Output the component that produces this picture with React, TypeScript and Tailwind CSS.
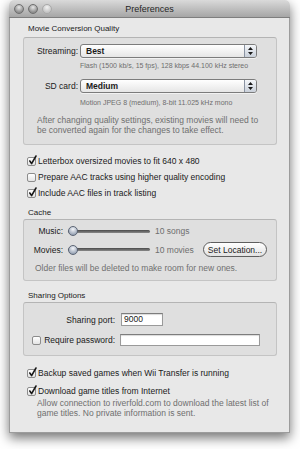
function Light({ dim }: { dim?: boolean }) {
  return (
    <span
      className={
        dim
          ? "block w-[10px] h-[10px] rounded-full border border-[#a9a9a9] bg-[radial-gradient(circle_at_50%_30%,#f2f2f2,#c4c4c4_70%)]"
          : "block w-[10px] h-[10px] rounded-full border border-[#6f6f6f] bg-[radial-gradient(circle_at_50%_30%,#e6e6e6,#8e8e8e_70%)]"
      }
    />
  );
}

function Check({ on }: { on?: boolean }) {
  return (
    <span className="relative block w-[9px] h-[9px] shrink-0 rounded-[2px] border border-[#8c8c8c] bg-gradient-to-b from-white to-[#e4e4e4]">
      {on && (
        <svg width="9" height="10" viewBox="0 0 9 10" className="absolute left-[0px] top-[-3px] overflow-visible">
          <path d="M1.8 6 L3.6 8.6 L8 1" fill="none" stroke="#1a1a1a" strokeWidth="1.6" strokeLinecap="round" strokeLinejoin="round" />
        </svg>
      )}
    </span>
  );
}

function Popup({ value }: { value: string }) {
  return (
    <div className="flex h-[14px] w-[177px] items-stretch rounded-[3px] border border-[#7c7c7c] bg-gradient-to-b from-white to-[#e6e6e6] shadow-[0_1px_0_rgba(255,255,255,0.6)]">
      <span className="flex-1 pl-[5px] text-[8.5px] leading-[12px] font-bold text-[#1a1a1a]">{value}</span>
      <span className="flex w-[12px] items-center justify-center rounded-r-[2px] border-l border-[#8a93a2] bg-gradient-to-b from-[#f4f6f9] to-[#c9d0da]">
        <svg width="5" height="8" viewBox="0 0 5 8">
          <path d="M2.5 0 L5 3 L0 3 Z M0 5 L5 5 L2.5 8 Z" fill="#1a1a1a" />
        </svg>
      </span>
    </div>
  );
}

function Slider() {
  return (
    <div className="relative flex h-[12px] w-[82px] items-center">
      <div className="h-[3px] w-full rounded-full bg-gradient-to-b from-[#4a4a4a] to-[#8a8a8a]" />
      <span className="absolute left-0 top-[1px] block w-[10px] h-[10px] rounded-full border border-[#5c6575] bg-[radial-gradient(circle_at_50%_30%,#f4f6fa,#9aa5b6_75%)]" />
    </div>
  );
}

function CheckRow({ on, label, className }: { on?: boolean; label: string; className?: string }) {
  return (
    <div className={"flex h-[12px] items-center gap-[2px] pl-[4px] " + (className ?? "")}>
      <Check on={on} />
      <span className="text-[8.5px] leading-[12px] text-[#1a1a1a]">{label}</span>
    </div>
  );
}

export default function App() {
  return (
    <div className="w-[300px] h-[449px] bg-white font-['Liberation_Sans',Arial,sans-serif] text-[#1a1a1a]">
      <div className="ml-[9px] w-[281px] h-[433px] flex flex-col rounded-t-[5px] overflow-hidden shadow-[0_5px_12px_rgba(0,0,0,0.55)]">
        {/* title bar */}
        <div className="grid h-[18px] shrink-0 grid-cols-[1fr_auto_1fr] items-center border-b border-[#7e7e7e] bg-gradient-to-b from-[#dadada] to-[#a6a6a6]">
          <div className="flex items-center gap-[4px] pl-[5px]">
            <Light />
            <Light />
            <Light dim />
          </div>
          <span className="text-[9px] leading-[12px] text-[#262626]">Preferences</span>
          <div />
        </div>

        {/* body */}
        <div className="flex flex-1 flex-col border-x border-b border-[#9c9c9c] bg-[#e8e8e8] pl-[13px] pr-[12px]">
          <div className="mt-[6px] pl-[5px] text-[8px] leading-[10px]">Movie Conversion Quality</div>
          <div className="mt-[3px] rounded-[3px] border border-[#c4c4c4] border-t-[#b4b4b4] bg-[#dfdfdf] pt-[6px] pb-[9px]">
            <div className="flex items-center gap-[2px]">
              <span className="w-[54px] text-right text-[8.5px] leading-[12px]">Streaming:</span>
              <Popup value="Best" />
            </div>
            <div className="mt-[3px] pl-[56px] text-[7px] leading-[9px] text-[#6e6e6e]">
              Flash (1500 kb/s, 15 fps), 128 kbps 44.100 kHz stereo
            </div>
            <div className="mt-[9px] flex items-center gap-[2px]">
              <span className="w-[54px] text-right text-[8.5px] leading-[12px]">SD card:</span>
              <Popup value="Medium" />
            </div>
            <div className="mt-[5px] pl-[56px] text-[7px] leading-[9px] text-[#6e6e6e]">
              Motion JPEG 8 (medium), 8-bit 11.025 kHz mono
            </div>
            <div className="mt-[8px] pl-[13px] pr-[10px] text-[8.5px] leading-[10px] text-[#6f6f6f]">
              After changing quality settings, existing movies will need to be converted again for the changes to take effect.
            </div>
          </div>

          <CheckRow on label="Letterbox oversized movies to fit 640 x 480" className="mt-[10px]" />
          <CheckRow label="Prepare AAC tracks using higher quality encoding" className="mt-[4px]" />
          <CheckRow on label="Include AAC files in track listing" className="mt-[4px]" />

          <div className="mt-[9px] pl-[5px] text-[8px] leading-[10px]">Cache</div>
          <div className="mt-[1px] rounded-[3px] border border-[#c4c4c4] border-t-[#b4b4b4] bg-[#dfdfdf] pt-[5px] pb-[7px]">
            <div className="flex h-[12px] items-center">
              <span className="w-[39px] text-right text-[8.5px] leading-[12px]">Music:</span>
              <span className="ml-[5px]"><Slider /></span>
              <span className="ml-[5px] text-[8.5px] leading-[12px] text-[#6e6e6e]">10 songs</span>
            </div>
            <div className="mt-[5px] flex h-[15px] items-center">
              <span className="w-[39px] text-right text-[8.5px] leading-[12px]">Movies:</span>
              <span className="ml-[5px]"><Slider /></span>
              <span className="ml-[5px] w-[48px] text-[8.5px] leading-[12px] text-[#6e6e6e]">10 movies</span>
              <button className="flex h-[15px] w-[64px] items-center justify-center rounded-full border border-[#5e5e5e] bg-gradient-to-b from-white to-[#e2e2e2] text-[8.5px] leading-[12px] text-[#1a1a1a]">
                Set Location...
              </button>
            </div>
            <div className="mt-[6px] pl-[11px] text-[8.5px] leading-[10px] text-[#6f6f6f]">
              Older files will be deleted to make room for new ones.
            </div>
          </div>

          <div className="mt-[10px] pl-[5px] text-[8px] leading-[10px]">Sharing Options</div>
          <div className="mt-[1px] rounded-[3px] border border-[#c4c4c4] border-t-[#b4b4b4] bg-[#dfdfdf] pt-[10px] pb-[9px]">
            <div className="flex items-center gap-[6px]">
              <span className="w-[91px] text-right text-[8.5px] leading-[12px]">Sharing port:</span>
              <div className="h-[13px] w-[42px] border border-[#9a9a9a] border-t-[#7d7d7d] bg-white pl-[2px] text-[8.5px] leading-[11px] shadow-[inset_0_1px_1px_rgba(0,0,0,0.15)]">
                9000
              </div>
            </div>
            <div className="mt-[8px] flex items-center gap-[5px]">
              <span className="flex w-[91px] items-center justify-end gap-[3px]">
                <Check />
                <span className="text-[8.5px] leading-[12px]">Require password:</span>
              </span>
              <div className="h-[12px] w-[140px] border border-[#9a9a9a] border-t-[#7d7d7d] bg-white shadow-[inset_0_1px_1px_rgba(0,0,0,0.15)]" />
            </div>
          </div>

          <CheckRow on label="Backup saved games when Wii Transfer is running" className="mt-[11px]" />
          <CheckRow on label="Download game titles from Internet" className="mt-[6px]" />
          <div className="mt-[1px] pl-[14px] pr-[2px] text-[8.5px] leading-[10px] text-[#6f6f6f]">
            Allow connection to riverfold.com to download the latest list of game titles. No private information is sent.
          </div>
        </div>
      </div>
    </div>
  );
}
